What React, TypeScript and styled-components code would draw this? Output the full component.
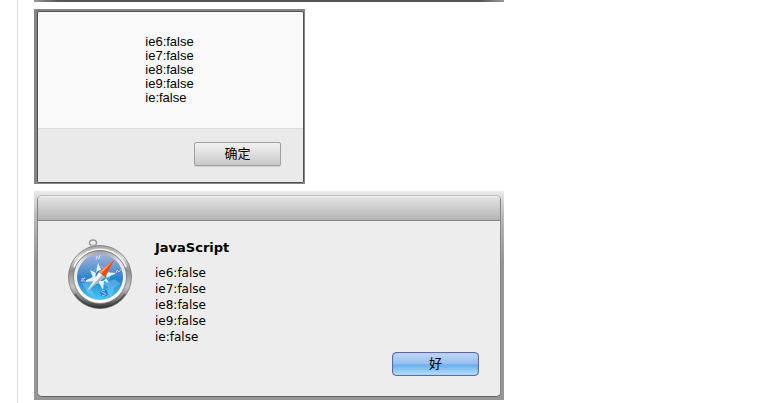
import React from "react";
import styled, { createGlobalStyle, css } from "styled-components";

const GlobalStyle = createGlobalStyle`
  * { box-sizing: border-box; }
  body { margin: 0; background: #fff; color: #000; }
`;

const Page = styled.main`
  min-height: 100vh;
  margin-left: 17px;
  padding-left: 16px;
  border-left: 1px solid #ddd;
  display: flex;
  flex-direction: column;
  align-items: flex-start;
  gap: 7px;
`;

const PreviousEdge = styled.div`
  width: 100%;
  max-width: 470px;
  height: 2px;
  flex: none;
  background: linear-gradient(90deg, #999, #555 24px, #555 calc(100% - 24px), #999);
`;

const ChromeFrame = styled.section`
  width: 100%;
  max-width: 271px;
  flex: none;
  padding: 2px 1px 1px 3px;
  background: #858585;
`;

const ChromeWindow = styled.div`
  border: 1px solid #505050;
  border-radius: 2px;
  overflow: hidden;
  background: #f9f9f9;
`;

const ChromeBody = styled.div`
  display: flex;
  justify-content: center;
  padding: 23px 2px 23px 0;
`;

const ChromeFooter = styled.footer`
  display: flex;
  justify-content: flex-end;
  padding: 13px 22px 16px;
  border-top: 1px solid #dcdcdc;
  background: #eaeaea;
`;

const Messages = styled.ul<{ $native?: boolean }>`
  list-style: none;
  margin: 0;
  padding: 0;
  ${({ $native }) =>
    $native
      ? css`
          font: 12px/16px "DejaVu Sans", sans-serif;
        `
      : css`
          font: 13px/14px "Liberation Sans", Arial, sans-serif;
        `}
`;

const DialogButton = styled.button<{ $primary?: boolean }>`
  width: 87px;
  height: 24px;
  padding: 0;
  font: 13px/20px "Liberation Sans", "Noto Sans CJK SC", sans-serif;
  color: #000;
  ${({ $primary }) =>
    $primary
      ? css`
          border: 1px solid #6068a8;
          border-radius: 4px;
          background: linear-gradient(#c3d7f4, #94bdee 50%, #6aacee 54%, #b2e3fc);
          box-shadow: inset 0 0 1px #5364ad;
        `
      : css`
          border: 1px solid #a0a0a0;
          border-radius: 2px;
          background: linear-gradient(#f0f0f0, #e2e2e2 40%, #c9c9c9);
          box-shadow: 0 1px 1px #d0d0d0;
        `}
`;

const SafariFrame = styled.section`
  width: 100%;
  max-width: 470px;
  flex: none;
  padding: 4px 3px 3px;
  background: linear-gradient(#eaeaea, #bbb 24px, #969696 70px, #969696);
`;

const SafariWindow = styled.div`
  border: 1px solid #858585;
  border-top-color: #bdbdbd;
  border-bottom-color: #606060;
  border-radius: 5px;
  overflow: hidden;
  background: #ededed;
`;

const TitleBar = styled.header`
  height: 25px;
  border-top: 1px solid #eee;
  border-bottom: 1px solid #858585;
  background: linear-gradient(#e3e3e3, #b4b4b4);
`;

const SafariBody = styled.div`
  display: grid;
  grid-template-columns: 66px 1fr;
  column-gap: 22px;
  padding: 18px 22px 0 29px;
`;

const SafariText = styled.div`
  min-width: 0;
`;

const Title = styled.h1`
  margin: 0 0 9px;
  font: bold 13px/17px "DejaVu Sans", sans-serif;
`;

const SafariFooter = styled.footer`
  display: flex;
  justify-content: flex-end;
  padding: 7px 21px 20px;
`;

const CompassSvg = styled.svg`
  display: block;
  width: 66px;
  height: 74px;
`;

const Compass = () => (
  <CompassSvg viewBox="0 0 66 74" aria-hidden="true">
    <defs>
      <linearGradient id="metal" x1="0" y1="0" x2="0" y2="1">
        <stop offset="0" stopColor="#a2a2a2" />
        <stop offset=".2" stopColor="#dedede" />
        <stop offset=".4" stopColor="#8c8c8c" />
        <stop offset=".65" stopColor="#c4c4c4" />
        <stop offset=".85" stopColor="#777" />
        <stop offset="1" stopColor="#303030" />
      </linearGradient>
      <linearGradient id="rim" x1="0" y1="0" x2="0" y2="1">
        <stop offset="0" stopColor="#999" />
        <stop offset=".2" stopColor="#e4e4e4" />
        <stop offset="1" stopColor="#fff" />
      </linearGradient>
      <linearGradient id="dial" x1="0" y1="0" x2="0" y2="1">
        <stop offset="0" stopColor="#a7b1d8" />
        <stop offset=".38" stopColor="#5292cf" />
        <stop offset=".55" stopColor="#2682cd" />
        <stop offset="1" stopColor="#48c9f7" />
      </linearGradient>
    </defs>
    <ellipse cx="26" cy="3.8" rx="3.5" ry="2.8" fill="none" stroke="#999" strokeWidth="1.5" />
    <path d="M23 6h6l1 3h-8z" fill="#bbb" />
    <circle cx="33" cy="38" r="31.5" fill="url(#metal)" stroke="#777" strokeWidth=".8" />
    <path d="M7 28A28 28 0 0 1 59 28" fill="none" stroke="#f2f2f2" strokeWidth="1.8" />
    <path d="M8 55A30 30 0 0 0 58 55" fill="none" stroke="#333" strokeWidth="2" opacity=".55" />
    <circle cx="33" cy="38" r="26.5" fill="url(#rim)" stroke="#777" strokeWidth=".8" />
    <circle cx="33" cy="38" r="23" fill="url(#dial)" />
    <path d="M15 44l6-4 5 4-2 6 4 8-7-4zM40 43l8-3 5 5-6 4-2 9-5-4 1-6-4-3z" fill="#91dff8" opacity=".35" />
    <circle cx="34" cy="36.5" r="8.5" fill="none" stroke="#75bde9" strokeWidth="1" />
    <path d="M31 24l4 9 15 1-11 5 3 5-5-2-1 9-5-9-16 1 11-5-3-7 6 3z" fill="#e1f7ff" />
    <circle cx="34" cy="36.5" r="5.5" fill="#2a86c9" />
    <circle cx="16" cy="41" r="3" fill="#416bd0" />
    <circle cx="51" cy="33" r="3" fill="#5385cf" />
    <circle cx="37" cy="54" r="3.6" fill="#227ddd" />
    <g fill="none" stroke="#d7eaff" strokeWidth=".8">
      <path d="M29 21l1-4 2 3 1-4M14 40l4-1-4 3 4 0M49 34l1-3 2 2 2-3M38 52c-4-2-4 2-1 2s1 4-2 2" />
    </g>
    <path d="M47 21L38 38l-6-5z" fill="#f14b12" />
    <path d="M47 21L32 33l2 2z" fill="#ff996c" />
    <path d="M20 52l12-19 6 5z" fill="#f5f5f5" />
    <path d="M20 52l15-16 3 2z" fill="#aeb5b9" />
    <path d="M47 21L38 38l-6-5z" fill="#ed4c14" />
    <path d="M47 21L32 33l2 2z" fill="#ff966a" />
  </CompassSvg>
);

const results = ["ie6:false", "ie7:false", "ie8:false", "ie9:false", "ie:false"];

const ResultList = ({ native = false }: { native?: boolean }) => (
  <Messages $native={native}>
    {results.map((result) => (
      <li key={result}>{result}</li>
    ))}
  </Messages>
);

export default function App() {
  return (
    <>
      <GlobalStyle />
      <Page>
        <PreviousEdge />
        <ChromeFrame role="dialog">
          <ChromeWindow>
            <ChromeBody>
              <ResultList />
            </ChromeBody>
            <ChromeFooter>
              <DialogButton type="button">确定</DialogButton>
            </ChromeFooter>
          </ChromeWindow>
        </ChromeFrame>
        <SafariFrame role="dialog" aria-labelledby="script-title">
          <SafariWindow>
            <TitleBar />
            <SafariBody>
              <Compass />
              <SafariText>
                <Title id="script-title">JavaScript</Title>
                <ResultList native />
              </SafariText>
            </SafariBody>
            <SafariFooter>
              <DialogButton type="button" $primary>好</DialogButton>
            </SafariFooter>
          </SafariWindow>
        </SafariFrame>
      </Page>
    </>
  );
}
